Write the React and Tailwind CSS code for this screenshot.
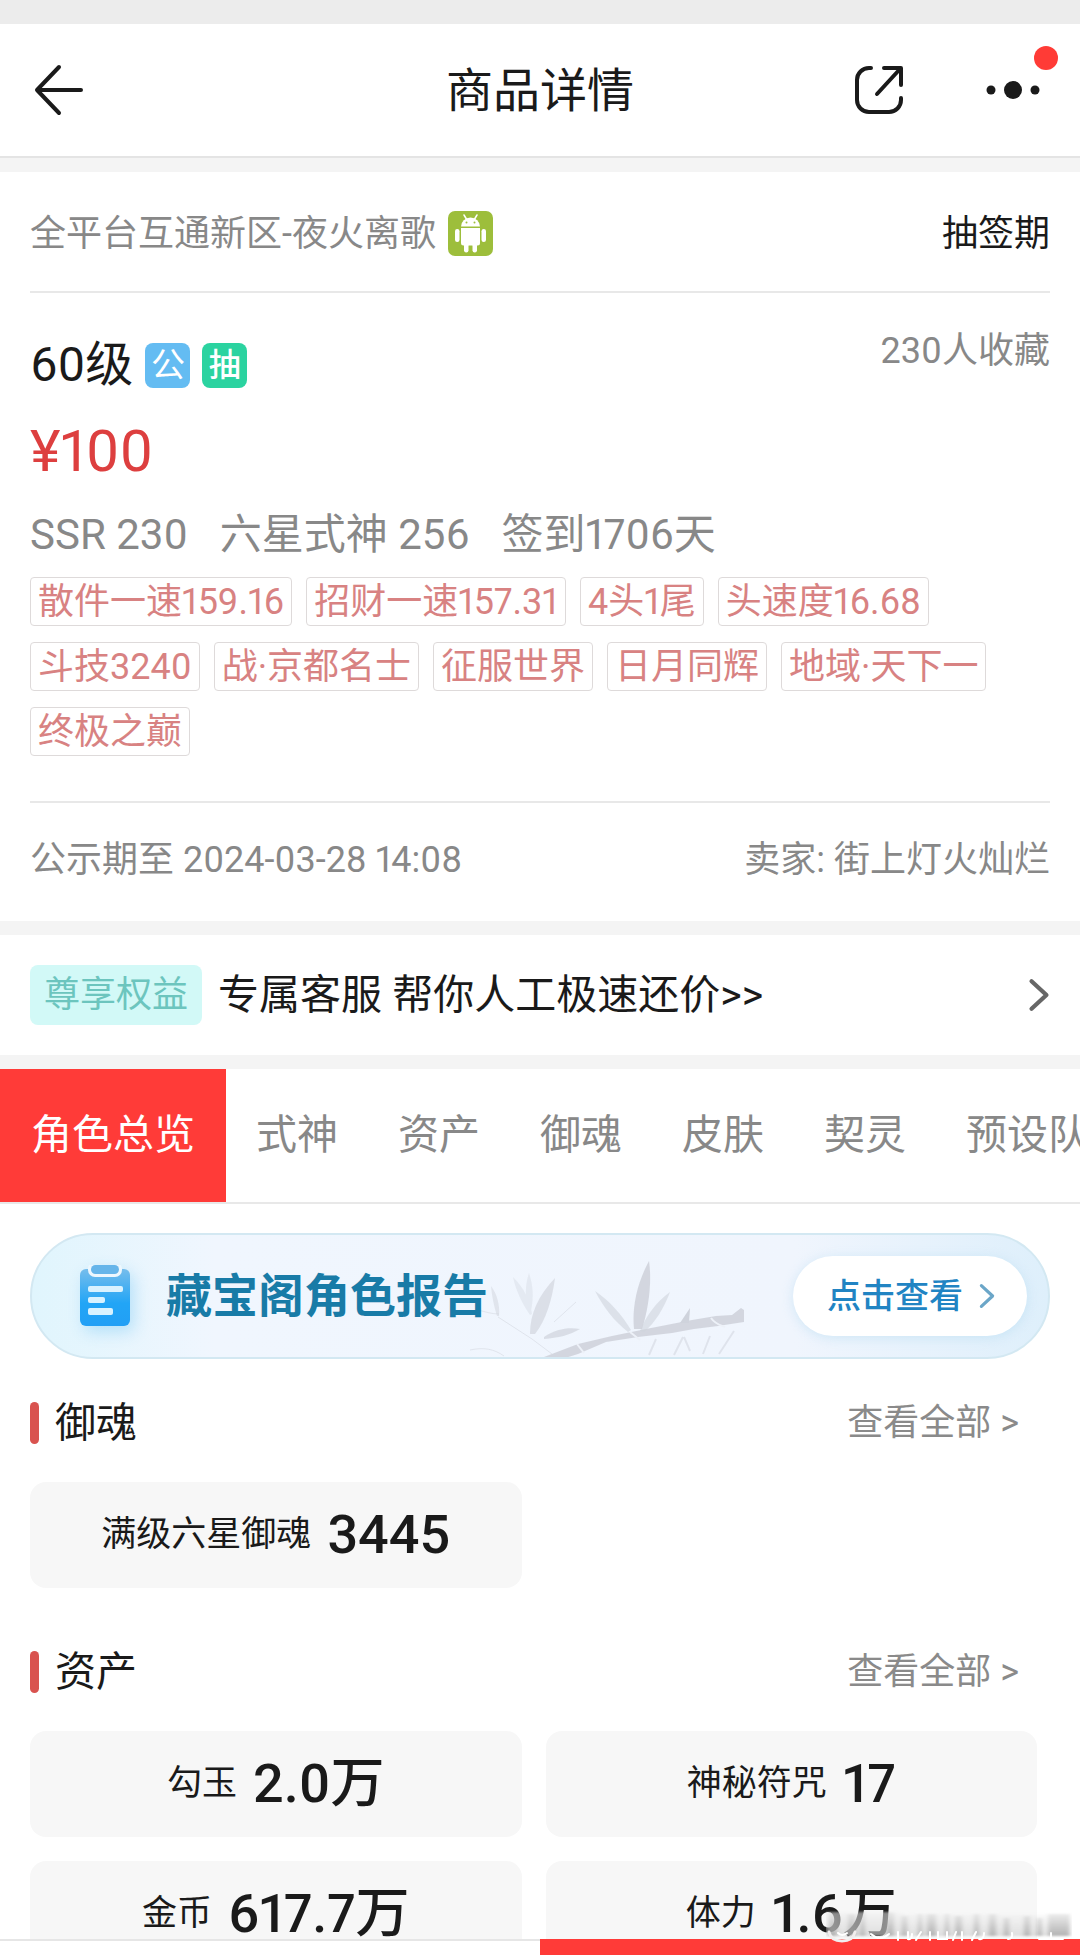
/**
 * Goods detail — listing page of the game item marketplace.
 * Header, listing summary, service entry, tabs and the role overview.
 */

import { useState } from "react";

const TAGS = [
  "散件一速159.16",
  "招财一速157.31",
  "4头1尾",
  "头速度16.68",
  "斗技3240",
  "战·京都名士",
  "征服世界",
  "日月同辉",
  "地域·天下一",
  "终极之巅",
];

const TABS = ["角色总览", "式神", "资产", "御魂", "皮肤", "契灵", "预设队伍"];

const SECTIONS = [
  { title: "御魂", items: [{ label: "满级六星御魂", value: "3445" }] },
  {
    title: "资产",
    items: [
      { label: "勾玉", value: "2.0万" },
      { label: "神秘符咒", value: "17" },
      { label: "金币", value: "617.7万" },
      { label: "体力", value: "1.6万" },
    ],
  },
];

function AndroidIcon() {
  return (
    <svg viewBox="0 0 45 45" className="size-[45px] shrink-0" role="img" aria-label="Android">
      <rect width="45" height="45" rx="7" fill="#9dbe3b" />
      <g fill="#fff">
        <path d="M13 15.500a9.500 9 0 0 1 19 0z" />
        <path d="M13 17h19v15a2.500 2.500 0 0 1-2.500 2.500h-14A2.500 2.500 0 0 1 13 32z" />
        <rect x="7" y="18" width="4.500" height="13" rx="2.200" />
        <rect x="33.500" y="18" width="4.500" height="13" rx="2.200" />
        <rect x="16" y="32" width="4.500" height="9.500" rx="2.200" />
        <rect x="24.500" y="32" width="4.500" height="9.500" rx="2.200" />
      </g>
      <path d="M16 4l3 5M29 4l-3 5" stroke="#fff" strokeWidth="1.500" strokeLinecap="round" />
      <circle cx="18.500" cy="11.500" r="1" fill="#9dbe3b" />
      <circle cx="26.500" cy="11.500" r="1" fill="#9dbe3b" />
    </svg>
  );
}

function ClipboardIcon() {
  return (
    <svg viewBox="0 0 50 62" className="h-[62px] w-[50px] shrink-0 drop-shadow-[4px_6px_8px_rgba(120,200,245,0.45)]" aria-hidden="true">
      <defs>
        <linearGradient id="clip" x1="0" y1="0" x2="0" y2="1">
          <stop offset="0" stopColor="#76bdec" />
          <stop offset="0.600" stopColor="#22a5f6" />
          <stop offset="1" stopColor="#229ff5" />
        </linearGradient>
      </defs>
      <rect x="0" y="4" width="50" height="57" rx="6" fill="url(#clip)" />
      <rect x="8" y="-3" width="34" height="15" rx="7" fill="#edf7fe" />
      <rect x="11" y="0" width="28" height="9" rx="4.500" fill="#66b5ea" />
      <g fill="#d9f2ff">
        <rect x="8" y="21" width="35" height="6" rx="2" />
        <rect x="8" y="32" width="17" height="6" rx="2" />
        <rect x="8" y="43" width="25" height="7" rx="2" />
      </g>
    </svg>
  );
}

// Ink-wash bamboo in the banner's background
function Bamboo() {
  return (
    <svg viewBox="0 0 290 100" className="absolute bottom-0 left-[438px] h-[100px] w-[290px]" aria-hidden="true">
      <g fill="#cfd3dc">
        <path d="M74 100l34-13 34-8 34-7 46-9 24-4 16-1 9-7 3 2v12l-26 4-24 3-22 4-34 4-32 5-28 12-16 5z" opacity="0.900" />
        <path d="M164 72c-2-20 2-44 15-68 3 20 0 46-7 68z" opacity="0.900" />
        <path d="M158 75c-14-11-24-24-33-41 15 10 27 24 36 39z" opacity="0.600" />
        <path d="M170 74c6-15 16-29 30-39-6 16-15 31-26 40z" opacity="0.600" />
        <path d="M60 77c0-20 8-38 25-56-3 22-9 42-20 56z" opacity="0.650" />
        <path d="M60 58c-8-12-14-24-17-38 11 11 17 23 19 37zM58 54c-3-14-3-26 1-38 4 12 5 24 2 38z" opacity="0.350" />
        <path d="M74 80c12-8 24-10 36-8-10 6-22 9-36 10z" opacity="0.700" />
        <path d="M27 59c-3-10-5-19-6-30 6 8 9 19 8 30z" opacity="0.500" />
        <path d="M210 66l10-15-1 15z" />
      </g>
      <g stroke="#cfd3dc" fill="none" opacity="0.500">
        <path d="M28 60l34 22 20 15M84 65l22-20M0 93c14-3 24-1 34 6M8 53c8 2 14 4 21 4" />
        <path d="M186 82l-7 16M213 80l-9 18M264 74l-15 23M240 79l-7 18M214 80l6 14" strokeWidth="2" />
      </g>
      <path d="M107 87l7 9M160 75l10 8M241 61c4 6 9 7 14 9" stroke="#edf1f8" strokeWidth="2" fill="none" />
    </svg>
  );
}

// Smeared author mark that runs over the footer's edge
function AuthorMark() {
  return (
    <svg viewBox="0 0 246 34" className="pointer-events-none absolute right-[8px] bottom-[11px] h-[34px] w-[246px]" aria-hidden="true">
      <defs>
        <linearGradient id="smear" x1="0" y1="0" x2="0" y2="1">
          <stop offset="0" stopColor="#aaa" stopOpacity="0.100" />
          <stop offset="1" stopColor="#999" stopOpacity="0.650" />
        </linearGradient>
        <filter id="soft" x="-5%" y="-5%" width="110%" height="110%">
          <feGaussianBlur stdDeviation="2 1" />
        </filter>
      </defs>
      <g filter="url(#soft)">
        <path d="M0 2h78v24H0z" fill="#f4f4f4" opacity="0.500" />
        <path d="M2 4h242v22H2z" fill="url(#smear)" opacity="0.400" />
        <path
          d="M2 2h9v24H2zM22 4h8v22h-8zM34 0h5v26h-5zM60 2h8v24h-8zM76 6h5v20h-5zM92 4h4v22h-4zM101 4h9v22h-9zM119 4h4v22h-4zM129 6h7v20h-7zM148 4h5v22h-5zM163 4h7v22h-7zM178 8h5v18h-5zM198 6h6v20h-6zM211 8h5v18h-5zM222 4h22v22h-22z"
          fill="url(#smear)"
        />
      </g>
      <g stroke="#fff" strokeWidth="2" fill="none" strokeLinecap="round">
        <path d="M3 22q2 9 13 9t13-9" stroke="#f1eeee" strokeWidth="3" />
        <path d="M12 23q4 4 9 0M45 24q9 8 18 0M72 22v8M82 22v7q4 1 4-5M95 22l-5 8M104 22v8M112 22v7h9v-7M130 22l-3 8M136 22v8M150 22l-4 8M158 23q0 7-5 6M186 23q1 6-4 6M213 29h24M225 23v6" />
      </g>
    </svg>
  );
}

function Chevron({ className }) {
  return (
    <svg viewBox="0 0 20 32" fill="none" stroke="currentColor" strokeWidth="4" strokeLinecap="round" strokeLinejoin="round" className={className} aria-hidden="true">
      <path d="M3 3l14 13L3 29" />
    </svg>
  );
}

function Stat({ label, value }) {
  return (
    <div className="flex h-[106px] items-center justify-center gap-4 rounded-2xl bg-[#f7f7f7]">
      <span className="text-[35px]">{label}</span>
      <span className="text-[54px] leading-none font-medium">{value}</span>
    </div>
  );
}

function Section({ title, items }) {
  return (
    <section className="pr-[43px] pl-[30px]">
      <div className="flex h-[44px] items-center justify-between pr-[18px]">
        <h2 className="flex items-center gap-4 text-[41px] leading-none">
          <span className="h-[42px] w-[9px] rounded-full bg-[#d9534f]" />
          {title}
        </h2>
        <a href="#all" className="text-[36px] leading-none text-[#8a8a8a]">
          查看全部 &gt;
        </a>
      </div>
      <div className="mt-[37px] grid grid-cols-2 gap-6">
        {items.map((item) => (
          <Stat key={item.label} {...item} />
        ))}
      </div>
    </section>
  );
}

export default function App() {
  const [tab, setTab] = useState(TABS[0]);

  return (
    <div className="relative flex h-screen flex-col overflow-hidden bg-white font-['Roboto','Noto_Sans_CJK_SC',sans-serif] text-[#1a1a1a] proportional-nums">
      <div className="h-6 shrink-0 bg-[#ececec]" />

      {/* Header */}
      <header className="grid h-[134px] shrink-0 grid-cols-[1fr_auto_1fr] items-center border-b-2 border-[#e4e4e4] px-[30px]">
        <button aria-label="返回" className="justify-self-start">
          <svg viewBox="0 0 58 58" fill="none" stroke="currentColor" strokeWidth="4" strokeLinecap="round" strokeLinejoin="round" className="size-[58px]">
            <path d="M29 6L7 29l22 23M7 29h44" />
          </svg>
        </button>
        <h1 className="text-[47px] leading-none">商品详情</h1>
        <div className="mr-[10px] flex items-center gap-[74px] justify-self-end">
          <button aria-label="分享">
            <svg viewBox="0 0 58 58" fill="none" stroke="currentColor" strokeWidth="4" strokeLinecap="round" strokeLinejoin="round" className="size-[58px]">
              <path d="M21 7h-2A12 12 0 0 0 7 19v20a12 12 0 0 0 12 12h20a12 12 0 0 0 12-12v-2M34 7h17v17M50 8L27 33" />
            </svg>
          </button>
          <button aria-label="更多" className="relative">
            <svg viewBox="0 0 58 58" fill="currentColor" className="size-[58px]">
              <circle cx="9" cy="29" r="4.500" />
              <circle cx="31" cy="29" r="9" />
              <circle cx="53" cy="29" r="4.500" />
            </svg>
            <span className="absolute -top-[15px] -right-[18px] size-6 rounded-full bg-[#ff3b36]" />
          </button>
        </div>
      </header>

      <main className="min-h-0 flex-1 overflow-hidden">
        {/* Listing summary */}
        <section className="border-y-[14px] border-[#f4f4f4] px-[30px]">
          <div className="flex h-[121px] items-center justify-between border-b-2 border-[#e8e8e8] pt-1 text-[36px]">
            <span className="flex items-center gap-3 text-[#888]">
              全平台互通新区-夜火离歌
              <AndroidIcon />
            </span>
            <span>抽签期</span>
          </div>

          <div className="flex items-start justify-between pt-[48px]">
            <h2 className="flex items-center gap-3 text-[48px] leading-[48px]">
              60级
              <span className="flex size-[45px] items-center justify-center rounded-lg bg-[#64bcf2] text-[34px] leading-none text-white">公</span>
              <span className="flex size-[45px] items-center justify-center rounded-lg bg-[#2bd3a0] text-[32px] leading-none font-medium text-white">抽</span>
            </h2>
            <span className="text-[36px] leading-[20px] text-[#888]">230人收藏</span>
          </div>
          <p className="mt-[34px] text-[58px] leading-[56px] text-[#dd3f3f]">¥100</p>
          <p className="mt-[33px] flex gap-8 text-[42px] leading-[46px] text-[#888]">
            <span>SSR 230</span>
            <span>六星式神 256</span>
            <span>签到1706天</span>
          </p>
          <ul className="mt-[19px] flex flex-wrap gap-x-[14px] gap-y-4 text-[36px] text-[#d88282]">
            {TAGS.map((tag) => (
              <li key={tag} className="flex h-[49px] items-center rounded-sm border border-[#dedada] px-[7px] leading-none">
                {tag}
              </li>
            ))}
          </ul>

          <div className="mt-[45px] flex h-[120px] items-center justify-between border-t-2 border-[#e8e8e8] pb-1 text-[36px] text-[#888]">
            <span>公示期至 2024-03-28 14:08</span>
            <span>卖家: 街上灯火灿烂</span>
          </div>
        </section>

        {/* Service entry */}
        <a href="#service" className="flex h-[120px] items-center px-[30px]">
          <span className="flex h-[60px] items-center rounded-lg bg-[#d2f9f7] px-[14px] text-[36px] leading-none text-[#6cc5be]">尊享权益</span>
          <span className="ml-4 text-[41px] leading-none">专属客服 帮你人工极速还价&gt;&gt;</span>
          <Chevron className="ml-auto h-[34px] w-[22px] text-[#666]" />
        </a>

        {/* Tabs */}
        <nav className="flex h-[149px] overflow-hidden border-t-[14px] border-b-2 border-t-[#f4f4f4] border-b-[#e8e8e8]" role="tablist">
          {TABS.map((name) => (
            <button
              key={name}
              role="tab"
              aria-selected={tab === name}
              onClick={() => setTab(name)}
              className={`shrink-0 text-[41px] ${tab === name ? "bg-[#ff3b38] px-[31px] text-white" : "px-[30px] text-[#888]"}`}
            >
              {name}
            </button>
          ))}
        </nav>

        {/* Role report banner */}
        <div className="relative mx-[30px] mt-[29px] flex h-[126px] items-center overflow-hidden rounded-full border-2 border-[#d3e8f2] bg-[linear-gradient(90deg,#e0f5fd_0%,#f0f6fe_18%,#f0f5fd_75%,#deeffb_100%)] pr-[21px] pl-[48px]">
          <Bamboo />
          <ClipboardIcon />
          <strong className="relative ml-9 text-[46px] leading-none font-bold text-[#187ba7]">藏宝阁角色报告</strong>
          <button className="relative ml-auto flex h-20 items-center gap-4 rounded-full bg-white pr-8 pl-[34px] text-[34px] leading-none font-medium text-[#2184c3] shadow-[0_2px_12px_rgba(170,215,240,0.45)]">
            点击查看
            <Chevron className="h-[26px] w-[16px] text-[#6ba6c8]" />
          </button>
        </div>

        <div className="mt-[42px] flex flex-col gap-[62px]">
          {SECTIONS.map((section) => (
            <Section key={section.title} {...section} />
          ))}
        </div>
      </main>

      {/* Footer actions, only their top edge is in view */}
      <footer className="grid h-4 shrink-0 grid-cols-2">
        <div className="border-t-2 border-[#e6e6e6] bg-white" />
        <div className="bg-[#ff3b38]" />
      </footer>
      <AuthorMark />
    </div>
  );
}
